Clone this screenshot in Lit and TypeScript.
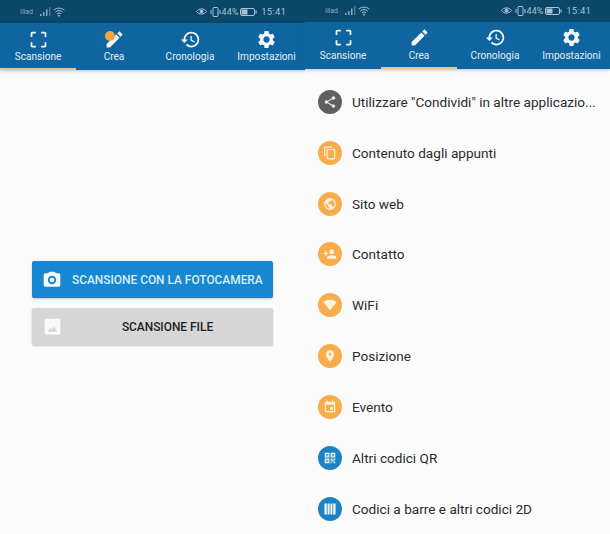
import { LitElement, html, css, svg } from "lit";
import { customElement } from "lit/decorators.js";

const ic = (d: any, size = 24, cls = "") => html`<svg class=${cls} width=${size} height=${size} viewBox="0 0 24 24" fill="currentColor">${d}</svg>`;

const P = {
  scan: svg`<path d="M3 5v4h2V5h4V3H5c-1.1 0-2 .9-2 2zm2 10H3v4c0 1.1.9 2 2 2h4v-2H5v-4zm14 4h-4v2h4c1.1 0 2-.9 2-2v-4h-2v4zm0-16h-4v2h4v4h2V5c0-1.1-.9-2-2-2z"/>`,
  edit: svg`<path d="M3 17.25V21h3.75L17.81 9.94l-3.75-3.75L3 17.25zM20.71 7.04c.39-.39.39-1.02 0-1.41l-2.34-2.34c-.39-.39-1.02-.39-1.41 0l-1.83 1.83 3.75 3.75 1.83-1.83z"/>`,
  history: svg`<path d="M13 3c-4.97 0-9 4.03-9 9H1l3.89 3.89.07.14L9 12H6c0-3.87 3.13-7 7-7s7 3.13 7 7-3.13 7-7 7c-1.93 0-3.68-.79-4.94-2.06l-1.42 1.42C8.27 19.99 10.51 21 13 21c4.97 0 9-4.03 9-9s-4.03-9-9-9zm-1 5v5l4.28 2.54.72-1.21-3.5-2.08V8H12z"/>`,
  gear: svg`<path d="M19.14 12.94c.04-.3.06-.61.06-.94 0-.32-.02-.64-.07-.94l2.03-1.58c.18-.14.23-.41.12-.61l-1.92-3.32c-.12-.22-.37-.29-.59-.22l-2.39.96c-.5-.38-1.03-.7-1.62-.94l-.36-2.54c-.04-.24-.24-.41-.48-.41h-3.84c-.24 0-.43.17-.47.41l-.36 2.54c-.59.24-1.13.57-1.62.94l-2.39-.96c-.22-.08-.47 0-.59.22L2.74 8.87c-.12.21-.08.47.12.61l2.03 1.58c-.05.3-.09.63-.09.94s.02.64.07.94l-2.03 1.58c-.18.14-.23.41-.12.61l1.92 3.32c.12.22.37.29.59.22l2.39-.96c.5.38 1.03.7 1.62.94l.36 2.54c.05.24.24.41.48.41h3.84c.24 0 .44-.17.47-.41l.36-2.54c.59-.24 1.13-.56 1.62-.94l2.39.96c.22.08.47 0 .59-.22l1.92-3.32c.12-.22.07-.47-.12-.61l-2.01-1.58zM12 15.6c-1.98 0-3.6-1.62-3.6-3.6s1.62-3.6 3.6-3.6 3.6 1.62 3.6 3.6-1.62 3.6-3.6 3.6z"/>`,
  share: svg`<path d="M18 16.08c-.76 0-1.44.3-1.96.77L8.91 12.7c.05-.23.09-.46.09-.7s-.04-.47-.09-.7l7.05-4.11c.54.5 1.25.81 2.04.81 1.66 0 3-1.34 3-3s-1.34-3-3-3-3 1.34-3 3c0 .24.04.47.09.7L8.04 9.81C7.5 9.31 6.79 9 6 9c-1.66 0-3 1.34-3 3s1.34 3 3 3c.79 0 1.5-.31 2.04-.81l7.12 4.16c-.05.21-.08.43-.08.65 0 1.61 1.31 2.92 2.92 2.92s2.92-1.31 2.92-2.92-1.31-2.92-2.92-2.92z"/>`,
  copy: svg`<path d="M16 1H4c-1.1 0-2 .9-2 2v14h2V3h12V1zm3 4H8c-1.1 0-2 .9-2 2v14c0 1.1.9 2 2 2h11c1.1 0 2-.9 2-2V7c0-1.1-.9-2-2-2zm0 16H8V7h11v14z"/>`,
  globe: svg`<path d="M12 2C6.48 2 2 6.48 2 12s4.48 10 10 10 10-4.48 10-10S17.52 2 12 2zm-1 17.93c-3.95-.49-7-3.85-7-7.93 0-.62.08-1.21.21-1.79L9 15v1c0 1.1.9 2 2 2v1.93zm6.9-2.54c-.26-.81-1-1.39-1.9-1.39h-1v-3c0-.55-.45-1-1-1H8v-2h2c.55 0 1-.45 1-1V7h2c1.1 0 2-.9 2-2v-.41c2.93 1.19 5 4.06 5 7.41 0 2.08-.8 3.97-2.1 5.39z"/>`,
  person: svg`<path d="M15 12c2.21 0 4-1.79 4-4s-1.79-4-4-4-4 1.79-4 4 1.79 4 4 4zm-9-2V7H4v3H1v2h3v3h2v-3h3v-2H6zm9 4c-2.67 0-8 1.34-8 4v2h16v-2c0-2.66-5.33-4-8-4z"/>`,
  wifi: svg`<path d="M12 21 23.6 7C23.15 6.66 18.7 3 12 3 5.3 3 .85 6.66.4 7L12 21z"/>`,
  pin: svg`<path fill-rule="evenodd" d="M12 2C8.13 2 5 5.13 5 9c0 5.25 7 13 7 13s7-7.75 7-13c0-3.87-3.13-7-7-7zm0 9.5a2.5 2.5 0 1 1 0-5 2.500 2.500 0 0 1 0 5z"/>`,
  event: svg`<path d="M17 12h-5v5h5v-5zM16 1v2H8V1H6v2H5c-1.11 0-2 .9-2 2v14c0 1.1.89 2 2 2h14c1.1 0 2-.9 2-2V5c0-1.1-.9-2-2-2h-1V1h-2zm3 18H5V8h14v11z"/>`,
  qr: svg`<path fill-rule="evenodd" d="M3 3h8v8H3V3zm2 2v4h4V5H5zm8-2h8v8h-8V3zm2 2v4h4V5h-4zM3 13h8v8H3v-8zm2 2v4h4v-4H5zm1-9h2v2H6V6zm10 0h2v2h-2V6zM6 16h2v2H6v-2zm7-3h3v3h-3v-3zm5 0h3v3h-3v-3zm-3 3h3v2h-3v-2zm-2 2h2v3h-2v-3zm5 0h3v3h-3v-3z"/>`,
  bars: svg`<path d="M2.500 2.500h4v19h-4zM7.900 2.500h3.400v19H7.900zM12.700 2.500h3.400v19h-3.400zM17.500 2.500h4v19h-4z"/>`,
  camera: svg`<path fill-rule="evenodd" d="M9 2 7.170 4H4c-1.100 0-2 .9-2 2v12c0 1.100.9 2 2 2h16c1.100 0 2-.9 2-2V6c0-1.100-.9-2-2-2h-3.170L15 2H9zm3 15a5 5 0 1 1 0-10 5 5 0 0 1 0 10zm0-2.200a2.800 2.800 0 1 0 0-5.600 2.800 2.800 0 0 0 0 5.600z"/>`,
  image: svg`<path fill-rule="evenodd" d="M21 19V5c0-1.100-.9-2-2-2H5c-1.100 0-2 .9-2 2v14c0 1.100.9 2 2 2h14c1.100 0 2-.9 2-2zM9 13.500l2 2.300L13.500 12l4 6H6.500L9 13.500z"/>`,
};

@customElement("app-root")
export class AppRoot extends LitElement {
  static styles = css`
    :host { display: block; width: 610px; height: 534px; overflow: hidden; font-family: Roboto, "Liberation Sans", sans-serif; background: #fbfbfb; }
    .wrap { display: grid; grid-template-columns: 305px 305px; height: 534px; }
    .screen { display: flex; flex-direction: column; height: 534px; min-width: 0; }
    .status { height: 23px; box-sizing: border-box; background: #0b4769; color: #a9c2d2; font-size: 9px; display: flex; align-items: center; padding: 0 19px 0 20px; }
    .carrier { font-size: 7px; margin-right: 7px; color: #8eaabd; }
    .status svg { display: block; }
    .right { margin-left: auto; display: flex; align-items: center; gap: 1px; }
    .time { font-size: 9.5px; margin-left: 3px; letter-spacing: .2px; }
    .tabs { height: 47px; background: #0f659f; display: grid; grid-template-columns: 76px 76px 76px 77px; box-shadow: 0 1px 3px rgba(30,90,150,.35); }
    .tab { box-sizing: border-box; height: 47px; position: relative; display: flex; flex-direction: column; align-items: center; color: #e3edf4; font-size: 10.1px; padding-top: 5.5px; border-bottom: 2px solid transparent; white-space: nowrap; }
    .tab.on { border-bottom-color: #e3c58c; }
    .tab svg { display: block; color: #f4f8fa; margin-bottom: 1.5px; }
    .dot { position: absolute; left: 29px; top: 8px; width: 10px; height: 10px; border-radius: 50%; background: #f4a63e; }
    .scan { flex: 1; display: flex; flex-direction: column; gap: 10px; padding: 191px 32px 0; }
    .btn { height: 37px; border-radius: 2px; display: grid; grid-template-columns: 40px 1fr; align-items: center; font-size: 11.9px; font-weight: 500; box-shadow: 0 1px 2px rgba(0,0,0,.22); }
    .btn svg { display: block; margin-left: 10px; }
    .blue { background: #1687d0; color: #d8effa; }
    .gray { background: #d5d6d5; color: #1e1e1e; text-align: center; }
    .gray span { margin-right: 10px; }
    .gray svg { color: #fafafa; }
    .blue svg { color: #f1f7fb; }
    .list { flex: 1; display: flex; flex-direction: column; padding: 7.8px 0 0 13px; }
    .row { height: 50.85px; flex: none; display: flex; align-items: center; gap: 10px; font-size: 13.6px; color: #2b2b2b; white-space: nowrap; }
    .circle { width: 24px; height: 24px; border-radius: 50%; display: flex; align-items: center; justify-content: center; color: #fdf3e2; flex: none; }
    .grey { background: #5f5f5f; color: #f2f2f2; }
    .amber { background: #f8ac4c; }
    .azure { background: #1b83c4; color: #eef6fb; }
  `;

  status() {
    return html`<div class="status">
      <span class="carrier">Iliad</span>
      <svg width="11" height="9" viewBox="0 0 11 9" fill="#8eaabd"><path d="M0 9h1.500V7H0zM3 9h1.500V5H3zM6 9h1.500V2.500H6z"/><path d="M9 9h1.500V0H9z" opacity=".5"/></svg>
      <svg style="margin-left:2px" width="12" height="10" viewBox="0 0 12 10" fill="none" stroke="#a9c2d2" stroke-width="1"><path d="M.6 3.200C3.600.5 8.400.5 11.400 3.200M2.300 5C4.400 3.100 7.600 3.100 9.700 5M4 6.800C5.200 5.700 6.800 5.700 8 6.800M6 9.500 5.200 8.500C5.700 8.100 6.300 8.100 6.800 8.500Z"/></svg>
      <div class="right">
        <svg width="11" height="9" viewBox="0 0 11 9" fill="none" stroke="#a9c2d2"><path d="M.5 4.500C3 1 8 1 10.500 4.500 8 8 3 8 .5 4.500Z"/><circle cx="5.500" cy="4.500" r="1.500" fill="#a9c2d2"/></svg>
        <svg style="margin-left:2px" width="11" height="10" viewBox="0 0 11 10" fill="none" stroke="#a9c2d2"><rect x="3" y=".5" width="5" height="9" rx=".8"/><path d="M1 3v4M10 3v4"/></svg>
        <span>44%</span>
        <svg style="margin-left:1px" width="17" height="8" viewBox="0 0 17 8"><rect x=".5" y=".5" width="14" height="7" rx="1.500" fill="none" stroke="#a9c2d2"/><rect x="1.500" y="1.500" width="6" height="5" fill="#a9c2d2"/><rect x="15.500" y="2.500" width="1.200" height="3" fill="#a9c2d2"/></svg>
        <span class="time">15:41</span>
      </div>
    </div>`;
  }

  tabs(active: number) {
    const items: [any, string][] = [[P.scan, "Scansione"], [P.edit, "Crea"], [P.history, "Cronologia"], [P.gear, "Impostazioni"]];
    return html`<div class="tabs">
      ${items.map(([p, t], i) => html`<div class="tab ${i === active ? "on" : ""}">
        ${ic(p, 21)}
        ${active === 0 && i === 1 ? html`<i class="dot"></i>` : ""}
        <span>${t}</span>
      </div>`)}
    </div>`;
  }

  render() {
    const rows: [any, string, string][] = [
      [P.share, "grey", 'Utilizzare "Condividi" in altre applicazio...'],
      [P.copy, "amber", "Contenuto dagli appunti"],
      [P.globe, "amber", "Sito web"],
      [P.person, "amber", "Contatto"],
      [P.wifi, "amber", "WiFi"],
      [P.pin, "amber", "Posizione"],
      [P.event, "amber", "Evento"],
      [P.qr, "azure", "Altri codici QR"],
      [P.bars, "azure", "Codici a barre e altri codici 2D"],
    ];
    return html`<div class="wrap">
      <section class="screen">
        ${this.status()}
        ${this.tabs(0)}
        <div class="scan">
          <div class="btn blue">${ic(P.camera, 20)}<span>SCANSIONE CON LA FOTOCAMERA</span></div>
          <div class="btn gray">${ic(P.image, 21)}<span>SCANSIONE FILE</span></div>
        </div>
      </section>
      <section class="screen">
        ${this.status()}
        ${this.tabs(1)}
        <div class="list">
          ${rows.map(([p, c, t]) => html`<div class="row"><span class="circle ${c}">${ic(p, 14)}</span><span>${t}</span></div>`)}
        </div>
      </section>
    </div>`;
  }
}
